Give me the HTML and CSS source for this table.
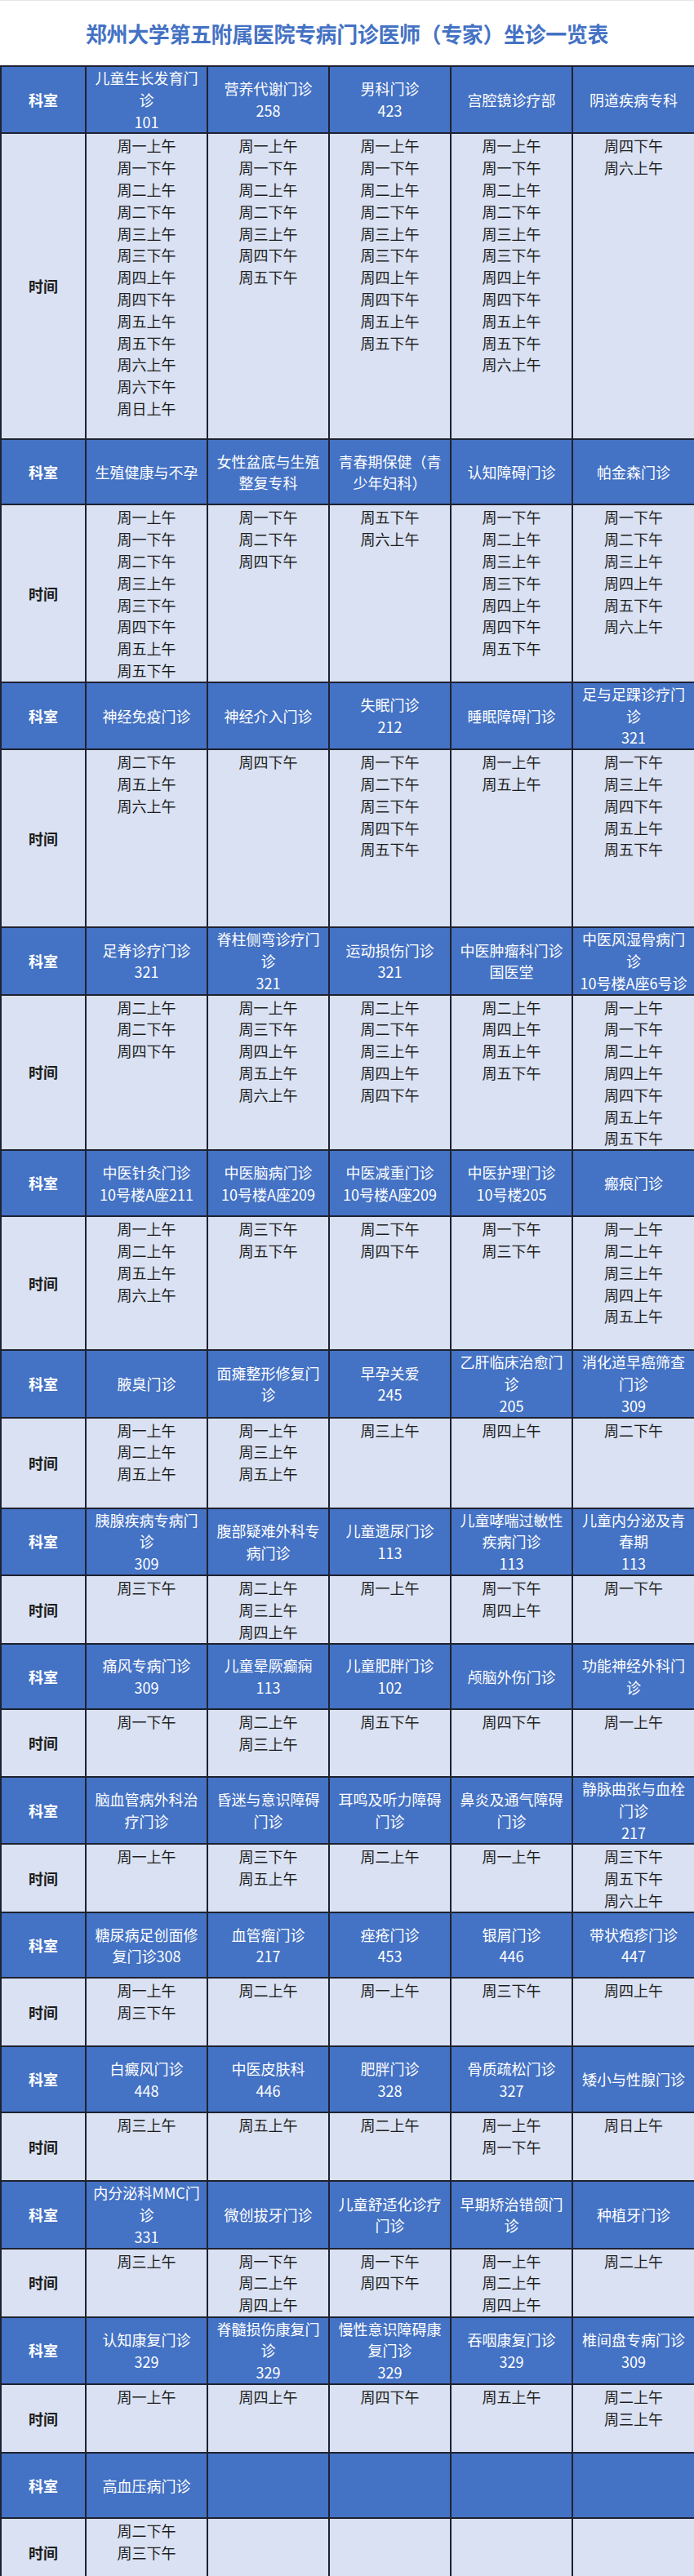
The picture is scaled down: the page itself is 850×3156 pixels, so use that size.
FILE: index.html
```html
<!DOCTYPE html>
<html lang="zh-CN">
<head>
<meta charset="utf-8">
<title>郑州大学第五附属医院专病门诊医师（专家）坐诊一览表</title>
<link rel="stylesheet" href="styles.css">
</head>
<body>
<div class="page">
  <h1 class="title">郑州大学第五附属医院专病门诊医师（专家）坐诊一览表</h1>
  <table class="sched">
    <colgroup>
      <col class="c-lab"><col class="c-dep"><col class="c-dep"><col class="c-dep"><col class="c-dep"><col class="c-last">
    </colgroup>
    <tbody>
      <tr class="hd h81"><th>科室</th><td>儿童生长发育门<br>诊<br>101</td><td>营养代谢门诊<br>258</td><td>男科门诊<br>423</td><td>宫腔镜诊疗部</td><td>阴道疾病专科</td></tr>
      <tr class="bd h375"><th>时间</th>
        <td>周一上午<br>周一下午<br>周二上午<br>周二下午<br>周三上午<br>周三下午<br>周四上午<br>周四下午<br>周五上午<br>周五下午<br>周六上午<br>周六下午<br>周日上午</td>
        <td>周一上午<br>周一下午<br>周二上午<br>周二下午<br>周三上午<br>周四下午<br>周五下午</td>
        <td>周一上午<br>周一下午<br>周二上午<br>周二下午<br>周三上午<br>周三下午<br>周四上午<br>周四下午<br>周五上午<br>周五下午</td>
        <td>周一上午<br>周一下午<br>周二上午<br>周二下午<br>周三上午<br>周三下午<br>周四上午<br>周四下午<br>周五上午<br>周五下午<br>周六上午</td>
        <td>周四下午<br>周六上午</td></tr>

      <tr class="hd h80"><th>科室</th><td>生殖健康与不孕</td><td>女性盆底与生殖<br>整复专科</td><td>青春期保健（青<br>少年妇科）</td><td>认知障碍门诊</td><td>帕金森门诊</td></tr>
      <tr class="bd h215"><th>时间</th>
        <td>周一上午<br>周一下午<br>周二下午<br>周三上午<br>周三下午<br>周四下午<br>周五上午<br>周五下午</td>
        <td>周一下午<br>周二下午<br>周四下午</td>
        <td>周五下午<br>周六上午</td>
        <td>周一下午<br>周二上午<br>周三上午<br>周三下午<br>周四上午<br>周四下午<br>周五下午</td>
        <td>周一下午<br>周二下午<br>周三上午<br>周四上午<br>周五下午<br>周六上午</td></tr>

      <tr class="hd h81"><th>科室</th><td>神经免疫门诊</td><td>神经介入门诊</td><td>失眠门诊<br>212</td><td>睡眠障碍门诊</td><td>足与足踝诊疗门<br>诊<br>321</td></tr>
      <tr class="bd h218"><th>时间</th>
        <td>周二下午<br>周五上午<br>周六上午</td>
        <td>周四下午</td>
        <td>周一下午<br>周二下午<br>周三下午<br>周四下午<br>周五下午</td>
        <td>周一上午<br>周五上午</td>
        <td>周一下午<br>周三上午<br>周四下午<br>周五上午<br>周五下午</td></tr>

      <tr class="hd h80"><th>科室</th><td>足脊诊疗门诊<br>321</td><td>脊柱侧弯诊疗门<br>诊<br>321</td><td>运动损伤门诊<br>321</td><td>中医肿瘤科门诊<br>国医堂</td><td>中医风湿骨病门<br>诊<br>10号楼A座6号诊</td></tr>
      <tr class="bd h188"><th>时间</th>
        <td>周二上午<br>周二下午<br>周四下午</td>
        <td>周一上午<br>周三下午<br>周四上午<br>周五上午<br>周六上午</td>
        <td>周二上午<br>周二下午<br>周三上午<br>周四上午<br>周四下午</td>
        <td>周二上午<br>周四上午<br>周五上午<br>周五下午</td>
        <td>周一上午<br>周一下午<br>周二上午<br>周四上午<br>周四下午<br>周五上午<br>周五下午</td></tr>

      <tr class="hd h81"><th>科室</th><td>中医针灸门诊<br>10号楼A座211</td><td>中医脑病门诊<br>10号楼A座209</td><td>中医减重门诊<br>10号楼A座209</td><td>中医护理门诊<br>10号楼205</td><td>瘢痕门诊</td></tr>
      <tr class="bd h164"><th>时间</th>
        <td>周一上午<br>周二上午<br>周五上午<br>周六上午</td>
        <td>周三下午<br>周五下午</td>
        <td>周二下午<br>周四下午</td>
        <td>周一下午<br>周三下午</td>
        <td>周一上午<br>周二上午<br>周三上午<br>周四上午<br>周五上午</td></tr>

      <tr class="hd h82"><th>科室</th><td>腋臭门诊</td><td>面瘫整形修复门<br>诊</td><td>早孕关爱<br>245</td><td>乙肝临床治愈门<br>诊<br>205</td><td>消化道早癌筛查<br>门诊<br>309</td></tr>
      <tr class="bd h111"><th>时间</th>
        <td>周一上午<br>周二上午<br>周五上午</td>
        <td>周一上午<br>周三上午<br>周五上午</td>
        <td>周三上午</td>
        <td>周四上午</td>
        <td>周二下午</td></tr>

      <tr class="hd h80"><th>科室</th><td>胰腺疾病专病门<br>诊<br>309</td><td>腹部疑难外科专<br>病门诊</td><td>儿童遗尿门诊<br>113</td><td>儿童哮喘过敏性<br>疾病门诊<br>113</td><td>儿童内分泌及青<br>春期<br>113</td></tr>
      <tr class="bd h84"><th>时间</th>
        <td>周三下午</td>
        <td>周二上午<br>周三上午<br>周四上午</td>
        <td>周一上午</td>
        <td>周一下午<br>周四上午</td>
        <td>周一下午</td></tr>

      <tr class="hd h80"><th>科室</th><td>痛风专病门诊<br>309</td><td>儿童晕厥癫痫<br>113</td><td>儿童肥胖门诊<br>102</td><td>颅脑外伤门诊</td><td>功能神经外科门<br>诊</td></tr>
      <tr class="bd h83"><th>时间</th>
        <td>周一下午</td>
        <td>周二上午<br>周三上午</td>
        <td>周五下午</td>
        <td>周四下午</td>
        <td>周一上午</td></tr>

      <tr class="hd h82"><th>科室</th><td>脑血管病外科治<br>疗门诊</td><td>昏迷与意识障碍<br>门诊</td><td>耳鸣及听力障碍<br>门诊</td><td>鼻炎及通气障碍<br>门诊</td><td>静脉曲张与血栓<br>门诊<br>217</td></tr>
      <tr class="bd h84"><th>时间</th>
        <td>周一上午</td>
        <td>周三下午<br>周五上午</td>
        <td>周二上午</td>
        <td>周一上午</td>
        <td>周三下午<br>周五下午<br>周六上午</td></tr>

      <tr class="hd h80"><th>科室</th><td>糖尿病足创面修<br>复门诊308</td><td>血管瘤门诊<br>217</td><td>痤疮门诊<br>453</td><td>银屑门诊<br>446</td><td>带状疱疹门诊<br>447</td></tr>
      <tr class="bd h84"><th>时间</th>
        <td>周一上午<br>周三下午</td>
        <td>周二上午</td>
        <td>周一上午</td>
        <td>周三下午</td>
        <td>周四上午</td></tr>

      <tr class="hd h81"><th>科室</th><td>白癜风门诊<br>448</td><td>中医皮肤科<br>446</td><td>肥胖门诊<br>328</td><td>骨质疏松门诊<br>327</td><td>矮小与性腺门诊</td></tr>
      <tr class="bd h84"><th>时间</th>
        <td>周三上午</td>
        <td>周五上午</td>
        <td>周二上午</td>
        <td>周一上午<br>周一下午</td>
        <td>周日上午</td></tr>

      <tr class="hd h81"><th>科室</th><td>内分泌科MMC门<br>诊<br>331</td><td>微创拔牙门诊</td><td>儿童舒适化诊疗<br>门诊</td><td>早期矫治错颌门<br>诊</td><td>种植牙门诊</td></tr>
      <tr class="bd h84"><th>时间</th>
        <td>周三上午</td>
        <td>周一下午<br>周二上午<br>周四上午</td>
        <td>周一下午<br>周四下午</td>
        <td>周一上午<br>周二上午<br>周四上午</td>
        <td>周二上午</td></tr>

      <tr class="hd h81"><th>科室</th><td>认知康复门诊<br>329</td><td>脊髓损伤康复门<br>诊<br>329</td><td>慢性意识障碍康<br>复门诊<br>329</td><td>吞咽康复门诊<br>329</td><td>椎间盘专病门诊<br>309</td></tr>
      <tr class="bd h84"><th>时间</th>
        <td>周一上午</td>
        <td>周四上午</td>
        <td>周四下午</td>
        <td>周五上午</td>
        <td>周二上午<br>周三上午</td></tr>

      <tr class="hd h80"><th>科室</th><td>高血压病门诊</td><td></td><td></td><td></td><td></td></tr>
      <tr class="bd h84"><th>时间</th>
        <td>周二下午<br>周三下午</td>
        <td></td>
        <td></td>
        <td></td>
        <td></td></tr>
    </tbody>
  </table>
</div>
</body>
</html>
```

FILE: styles.css
```css
html, body {
  margin: 0;
  padding: 0;
  background: #ffffff;
}

body {
  font-family: "Noto Sans CJK SC", "Noto Sans", sans-serif;
  color: #1d1d1d;
}

.page {
  width: 850px;
}

.title {
  margin: 0;
  height: 80px;
  display: flex;
  align-items: center;
  justify-content: center;
  font-size: 26px;
  font-weight: 700;
  color: #4472c4;
  letter-spacing: -0.4px;
  border-top: 1px solid #e6e6e6;
  box-sizing: border-box;
}

.sched {
  width: 850px;
  table-layout: fixed;
  border-collapse: collapse;
  font-size: 18px;
  line-height: 26.8px;
}

.c-lab { width: 104px; }
.c-dep { width: 149px; }
.c-last { width: 150px; }

.sched th,
.sched td {
  border: 2px solid #1e2230;
  padding: 0;
  text-align: center;
  white-space: nowrap;
  overflow: hidden;
}

.sched th {
  font-weight: 700;
  vertical-align: middle;
}

.hd th,
.hd td {
  background: #4472c4;
  color: #ffffff;
  vertical-align: middle;
}

.bd th,
.bd td {
  background: #d9e1f2;
  color: #1d1d1d;
}

.bd td {
  vertical-align: top;
  padding-top: 1px;
}

.h80 { height: 80px; }
.h81 { height: 81px; }
.h82 { height: 82px; }
.h83 { height: 83px; }
.h84 { height: 84px; }
.h111 { height: 111px; }
.h164 { height: 164px; }
.h188 { height: 188px; }
.h215 { height: 215px; }
.h218 { height: 218px; }
.h375 { height: 375px; }
```
